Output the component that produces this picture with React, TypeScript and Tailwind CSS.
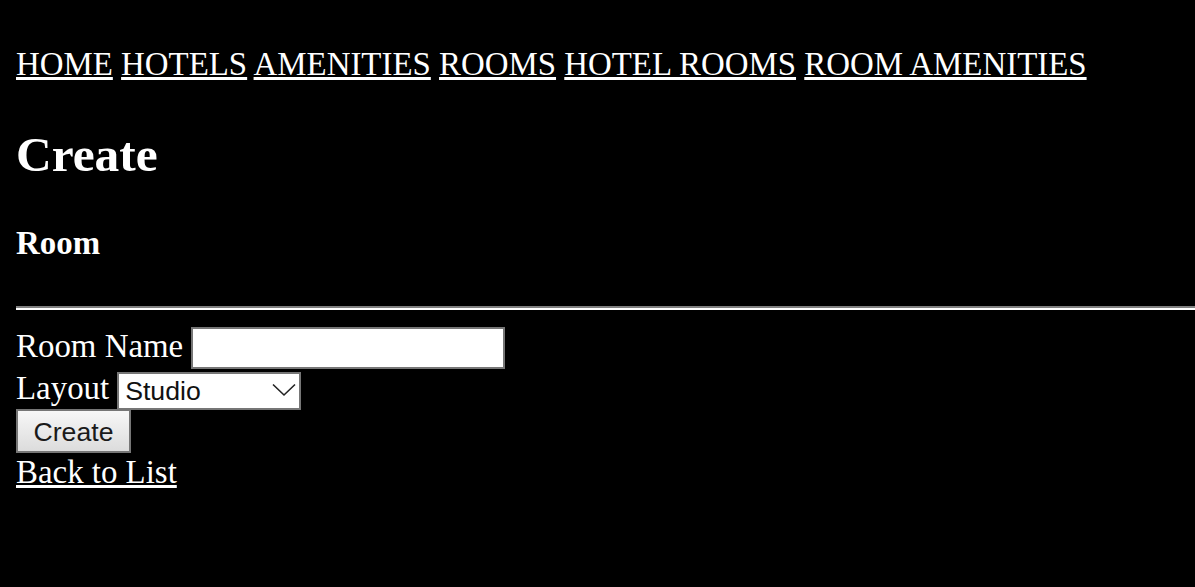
import { useState } from 'react';

const navLinks = ['HOME', 'HOTELS', 'AMENITIES', 'ROOMS', 'HOTEL ROOMS', 'ROOM AMENITIES'];

export default function App() {
  const [name, setName] = useState('');
  const [layout, setLayout] = useState('Studio');

  return (
    <div className="min-h-screen bg-black text-white font-['Liberation_Serif',serif] text-[32.9px] leading-[37px] pl-4 pt-[46px]">
      <nav className="whitespace-nowrap">
        {navLinks.map((l, i) => (
          <span key={l}>
            <a href="#" className="underline">{l}</a>
            {i < navLinks.length - 1 ? ' ' : ''}
          </span>
        ))}
      </nav>

      <h1 className="mt-[44px] text-[49.4px] font-bold leading-[55px]">Create</h1>
      <h4 className="mt-[43px] text-[32.9px] font-bold leading-[37px]">Room</h4>
      <hr className="mt-[44px] border-0 border-t-2 border-b-2 border-t-[#808080] border-b-white" />

      <form className="mt-4" onSubmit={(e) => e.preventDefault()}>
        <div className="flex items-start gap-2 h-[45px]">
          <label className="mt-[2px]">Room Name</label>
          <input
            value={name}
            onChange={(e) => setName(e.target.value)}
            className="mt-px h-[42px] w-[314px] border-2 border-[#767676] bg-white text-black font-['Liberation_Sans',sans-serif] text-[26px] px-1 outline-none"
          />
        </div>
        <div className="flex items-start gap-2 h-[38px]">
          <label className="-mt-px">Layout</label>
          <div className="relative">
            <select
              value={layout}
              onChange={(e) => setLayout(e.target.value)}
              className="appearance-none h-[38px] w-[184px] border-2 border-[#767676] bg-white text-[#111] font-['Liberation_Sans',sans-serif] text-[26.67px] leading-[normal] pl-[6px] outline-none"
            >
              <option>Studio</option>
              <option>One Bedroom</option>
              <option>Two Bedroom</option>
            </select>
            <svg className="pointer-events-none absolute left-[155px] top-[12px]" width="24" height="14" viewBox="0 0 24 14" fill="none">
              <path d="M1 1.5L12 12L23 1.5" stroke="#222" strokeWidth="1.6" />
            </svg>
          </div>
        </div>
        <div className="h-[45px]">
          <button
            type="submit"
            className="h-[44px] w-[115px] pt-[2px] border-2 border-[#767676] bg-gradient-to-b from-[#f7f7f7] to-[#dcdcdc] text-[#1a1a1a] font-['Liberation_Sans',sans-serif] text-[26.67px] leading-[normal]"
          >
            Create
          </button>
        </div>
        <a href="#" className="underline">Back to List</a>
      </form>
    </div>
  );
}
